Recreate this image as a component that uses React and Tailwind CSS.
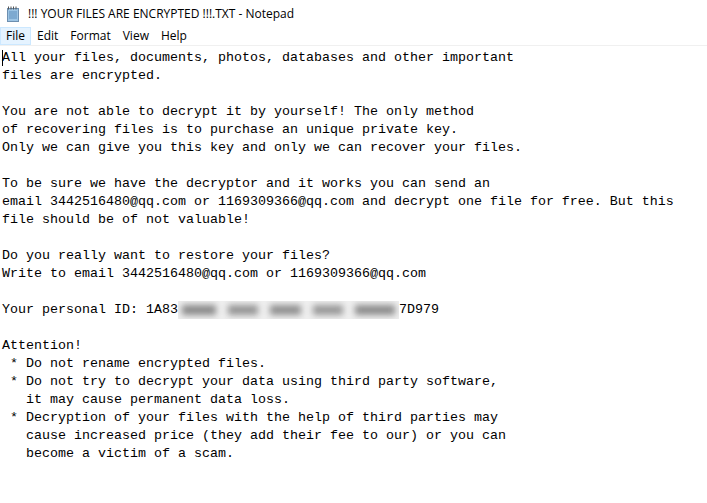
import React from "react";

const mono = { fontFamily: '"Liberation Mono", "DejaVu Sans Mono", monospace' };

const lines = [
  "All your files, documents, photos, databases and other important",
  "files are encrypted.",
  "",
  "You are not able to decrypt it by yourself! The only method",
  "of recovering files is to purchase an unique private key.",
  "Only we can give you this key and only we can recover your files.",
  "",
  "To be sure we have the decryptor and it works you can send an",
  "email 3442516480@qq.com or 1169309366@qq.com and decrypt one file for free. But this",
  "file should be of not valuable!",
  "",
  "Do you really want to restore your files?",
  "Write to email 3442516480@qq.com or 1169309366@qq.com",
  "",
  "ID",
  "",
  "Attention!",
  " * Do not rename encrypted files.",
  " * Do not try to decrypt your data using third party software,",
  "   it may cause permanent data loss.",
  " * Decryption of your files with the help of third parties may",
  "   cause increased price (they add their fee to our) or you can",
  "   become a victim of a scam.",
];

function NotepadIcon() {
  return (
    <svg width="14" height="16" viewBox="0 0 14 16">
      <rect x="1.5" y="2.5" width="11" height="13" fill="#cfe3f3" stroke="#6d8fb0" />
      <rect x="2" y="3" width="10" height="12" fill="#9cc4e4" />
      <path d="M3 6h8M3 8h8M3 10h8M3 12h8" stroke="#5f8fbd" strokeWidth="1" />
      <path d="M2.5 0.5v3M5 0.5v3M7.5 0.5v3M10 0.5v3" stroke="#555" strokeWidth="1" />
    </svg>
  );
}

export default function App() {
  return (
    <div className="w-[707px] h-[503px] bg-white overflow-hidden flex flex-col text-black">
      <div
        className="h-[27px] flex items-center pl-[6px] gap-[8px] text-[12px]"
        style={{ fontFamily: '"Open Sans", "Noto Sans", sans-serif' }}
      >
        <NotepadIcon />
        <span>!!! YOUR FILES ARE ENCRYPTED !!!.TXT - Notepad</span>
      </div>
      <div
        className="h-[19px] flex items-center text-[12px] border-b border-[#f0f0f0]"
        style={{ fontFamily: '"Open Sans", "Noto Sans", sans-serif' }}
      >
        <span className="h-full flex items-center px-[5px] bg-[#e5f3ff] border border-[#cce8ff]">File</span>
        <span className="px-[6px]">Edit</span>
        <span className="px-[6px]">Format</span>
        <span className="px-[6px]">View</span>
        <span className="px-[6px]">Help</span>
      </div>
      <div className="relative pl-[2px] pt-[3px] text-[13.33px] leading-[18px]" style={mono}>
        <div className="absolute left-[2px] top-[4px] w-[1px] h-[16px] bg-black" />
        {lines.map((l, i) =>
          l === "ID" ? (
            <div key={i} className="h-[18px] flex items-center whitespace-pre">
              <span>Your personal ID: 1A83</span>
              <span className="relative w-[221px] h-[18px] bg-[#efefef] overflow-hidden">
                <span className="absolute inset-0 flex items-center gap-[12px] px-[4px] blur-[3px]">
                  <span className="w-[36px] h-[10px] bg-[#8a8a8a]" />
                  <span className="w-[32px] h-[10px] bg-[#959595]" />
                  <span className="w-[32px] h-[10px] bg-[#909090]" />
                  <span className="w-[32px] h-[10px] bg-[#989898]" />
                  <span className="w-[42px] h-[10px] bg-[#8c8c8c]" />
                </span>
              </span>
              <span>7D979</span>
            </div>
          ) : (
            <div key={i} className="h-[18px] whitespace-pre">
              {l}
            </div>
          )
        )}
      </div>
    </div>
  );
}
